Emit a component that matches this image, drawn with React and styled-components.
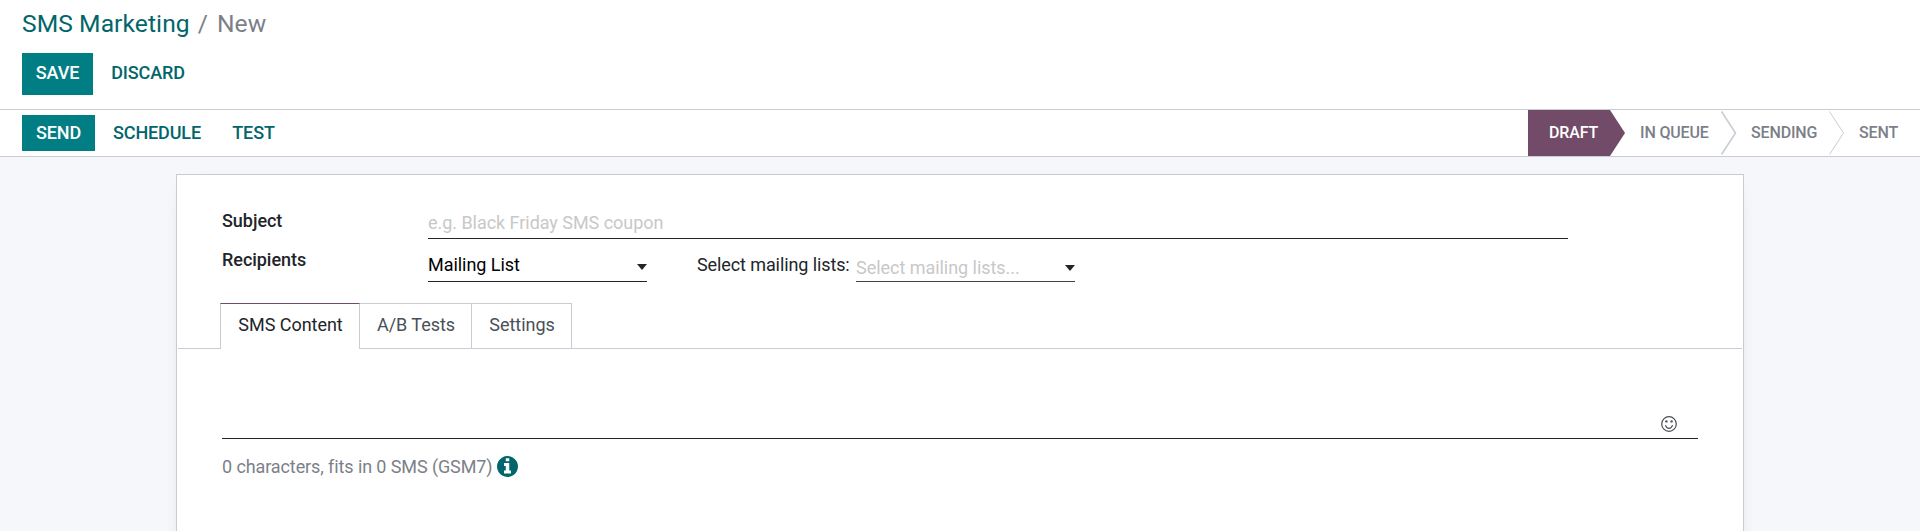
import React from "react";
import styled, { createGlobalStyle } from "styled-components";

const GlobalStyle = createGlobalStyle`
  *, *::before, *::after { box-sizing: border-box; }
  body {
    margin: 0;
    overflow: hidden;
    background: #f6f7fa;
    color: #212529;
    font: 400 18px/24px Roboto, sans-serif;
  }
  button, input, textarea { font: inherit; letter-spacing: inherit; border: 0; margin: 0; padding: 0; background: none; outline: 0; }
`;

const Page = styled.div`
  display: flex;
  flex-direction: column;
  height: 531px;
  overflow: hidden;
  letter-spacing: -0.04px;
`;

const ControlPanel = styled.header`
  flex: none;
  height: 110px;
  padding: 8px 22px 0;
  background: #fff;
  border-bottom: 1px solid #c9ccd2;
`;

const Breadcrumb = styled.nav`
  display: flex;
  height: 32px;
  line-height: 31px;
  font-size: 24.6px;
  letter-spacing: 0.08px;
  color: #7c7f89;
  white-space: pre;
`;

const Crumb = styled.span`
  color: ${(p) => (p.$link ? "#01666b" : "inherit")};
`;

const Slash = styled.span`
  padding: 0 9px 0 8px;
`;

const Actions = styled.div`
  display: flex;
  margin-top: ${(p) => p.$top || 0}px;
`;

const Button = styled.button`
  height: ${(p) => p.$h || 36}px;
  width: ${(p) => p.$w}px;
  padding-bottom: ${(p) => p.$lift || 0}px;
  text-align: center;
  text-transform: uppercase;
  font-weight: 500;
  letter-spacing: -0.12px;
  color: ${(p) => (p.$primary ? "#fff" : "#01666b")};
  background: ${(p) => (p.$primary ? "#017e84" : "transparent")};
`;

const StatusBar = styled.div`
  flex: none;
  display: flex;
  justify-content: space-between;
  height: 47px;
  padding-left: 22px;
  background: #fff;
  border-bottom: 1px solid #c9ccd2;
`;

const Stages = styled.div`
  display: flex;
  height: 46px;
  padding-right: 22px;
`;

const Stage = styled.div`
  width: ${(p) => p.$w}px;
  padding-left: ${(p) => p.$pad || 0}px;
  line-height: 45px;
  font-size: 16px;
  font-weight: 500;
  letter-spacing: -0.15px;
  white-space: nowrap;
  color: ${(p) => (p.$active ? "#fff" : "#7c7f89")};
  background: ${(p) => (p.$active ? "#714b67" : "transparent")};
  clip-path: ${(p) => (p.$active ? "polygon(0 0, 82px 0, 100% 50%, 82px 100%, 0 100%)" : "none")};
`;

const Chevron = styled.svg`
  width: 16px;
  height: 46px;
  fill: none;
  stroke: #c9ccd2;
`;

const Sheet = styled.main`
  width: 1568px;
  height: 420px;
  flex: none;
  margin: 17px auto 0;
  padding: 0 1px;
  background: #fff;
  border: 1px solid #c9ccd2;
  box-shadow: 0 5px 20px -15px rgba(0, 0, 0, 0.4);
`;

const Fields = styled.div`
  display: grid;
  grid-template-columns: 206px 1140px;
  grid-template-rows: 64px 64px;
  padding-left: 44px;
`;

const Label = styled.label`
  padding-top: ${(p) => p.$top}px;
  font-weight: 500;
`;

const SubjectInput = styled.input`
  height: 64px;
  padding-top: 36px;
  padding-bottom: 4px;
  border-bottom: 1px solid #212529;
  color: #212529;
  &::placeholder { color: #c8c8c8; opacity: 1; }
`;

const RecipientRow = styled.div`
  display: flex;
  height: 43px;
`;

const Select = styled.div`
  display: flex;
  justify-content: space-between;
  width: 219px;
  padding-top: ${(p) => (p.$empty ? 17 : 14)}px;
  color: ${(p) => (p.$empty ? "#c8c8c8" : "#000")};
  border-bottom: 1px solid ${(p) => (p.$empty ? "#444" : "#212529")};
`;

const Caret = styled.i`
  width: 0;
  margin-top: ${(p) => p.$top}px;
  height: 0;
  border: solid transparent;
  border-width: 6px 5.5px 0;
  border-top-color: #212529;
`;

const InlineText = styled.span`
  width: 209px;
  padding: 14px 0 0 50px;
  letter-spacing: -0.1px;
  white-space: nowrap;
`;

const Tabs = styled.div`
  display: flex;
  height: 46px;
  padding-left: 42px;
  border-bottom: 1px solid #c9ccd2;
`;

const Tab = styled.button`
  width: ${(p) => p.$w}px;
  height: ${(p) => (p.$active ? 46 : 45)}px;
  padding-left: 1px;
  padding-bottom: ${(p) => (p.$active ? 3 : 2)}px;
  border: 1px solid #c9ccd2;
  border-width: 1px 1px 0 ${(p) => (p.$active ? 1 : 0)}px;
  border-top-color: ${(p) => (p.$active ? "#714b67" : "#c9ccd2")};
  background: #fff;
  color: ${(p) => (p.$active ? "#212529" : "#495057")};
`;

const Composer = styled.div`
  display: flex;
  justify-content: flex-end;
  align-items: flex-end;
  height: 90px;
  margin: 0 44px;
  padding: 0 21px 6px 0;
  border-bottom: 1px solid #212529;
`;

const Smiley = styled.svg`
  width: 16px;
  height: 16px;
`;

const Counter = styled.div`
  display: flex;
  gap: 4px;
  padding: 16px 0 0 44px;
  letter-spacing: -0.1px;
  color: #7c7f89;
`;

const InfoIcon = styled.svg`
  width: 21px;
  height: 21px;
  margin-top: 1px;
  fill: #01666b;
`;

export default function App() {
  return (
    <Page>
      <GlobalStyle />
      <ControlPanel>
        <Breadcrumb>
          <Crumb $link>SMS Marketing</Crumb>
          <Slash>/</Slash>
          <Crumb>New</Crumb>
        </Breadcrumb>
        <Actions $top={13}>
          <Button $primary $w={71} $h={42} $lift={3}>Save</Button>
          <Button $w={110} $h={42} $lift={3}>Discard</Button>
        </Actions>
      </ControlPanel>
      <StatusBar>
        <Actions $top={5}>
          <Button $primary $w={73}>Send</Button>
          <Button $w={124}>Schedule</Button>
          <Button $w={69}>Test</Button>
        </Actions>
        <Stages>
          <Stage $active $w={97} $pad={21}>DRAFT</Stage>
          <Stage $w={96} $pad={15}>IN QUEUE</Stage>
          <Chevron><path d="M0.5 1.5 L14.5 23 L0.5 44.5" strokeWidth="1.6" /></Chevron>
          <Stage $w={92} $pad={14}>SENDING</Stage>
          <Chevron><path d="M0.5 1.5 L14.5 23 L0.5 44.5" strokeWidth="1" /></Chevron>
          <Stage $w={53} $pad={14}>SENT</Stage>
        </Stages>
      </StatusBar>
      <Sheet>
        <Fields>
          <Label $top={34}>Subject</Label>
          <SubjectInput placeholder="e.g. Black Friday SMS coupon" />
          <Label $top={9}>Recipients</Label>
          <RecipientRow>
            <Select>Mailing List<Caret $top={11} /></Select>
            <InlineText>Select mailing lists:</InlineText>
            <Select $empty>Select mailing lists...<Caret $top={9} /></Select>
          </RecipientRow>
        </Fields>
        <Tabs>
          <Tab $active $w={140}>SMS Content</Tab>
          <Tab $w={112}>A/B Tests</Tab>
          <Tab $w={100}>Settings</Tab>
        </Tabs>
        <Composer>
          <Smiley viewBox="0 0 16 16" fill="none" stroke="#495057" strokeWidth="1.2">
            <circle cx="8" cy="8" r="7.3" />
            <path d="M4.7 9.7 C5.6 13.2 10.4 13.2 11.3 9.7" strokeLinecap="round" />
            <circle cx="5.4" cy="5.4" r="1.2" fill="#495057" stroke="none" />
            <circle cx="10.6" cy="5.4" r="1.2" fill="#495057" stroke="none" />
          </Smiley>
        </Composer>
        <Counter>
          <span>0 characters, fits in 0 SMS (GSM7)</span>
          <InfoIcon viewBox="128 128 1536 1536">
            <path d="M1152 1376v-160q0-14-9-23t-23-9h-96v-512q0-14-9-23t-23-9h-320q-14 0-23 9t-9 23v160q0 14 9 23t23 9h96v320h-96q-14 0-23 9t-9 23v160q0 14 9 23t23 9h448q14 0 23-9t9-23zM1024 480v-160q0-14-9-23t-23-9h-192q-14 0-23 9t-9 23v160q0 14 9 23t23 9h192q14 0 23-9t9-23zM1664 896q0 209-103 385.5t-279.5 279.5-385.5 103-385.5-103-279.5-279.5-103-385.5 103-385.5 279.5-279.5 385.5-103 385.5 103 279.5 279.5 103 385.5z" />
          </InfoIcon>
        </Counter>
      </Sheet>
    </Page>
  );
}
